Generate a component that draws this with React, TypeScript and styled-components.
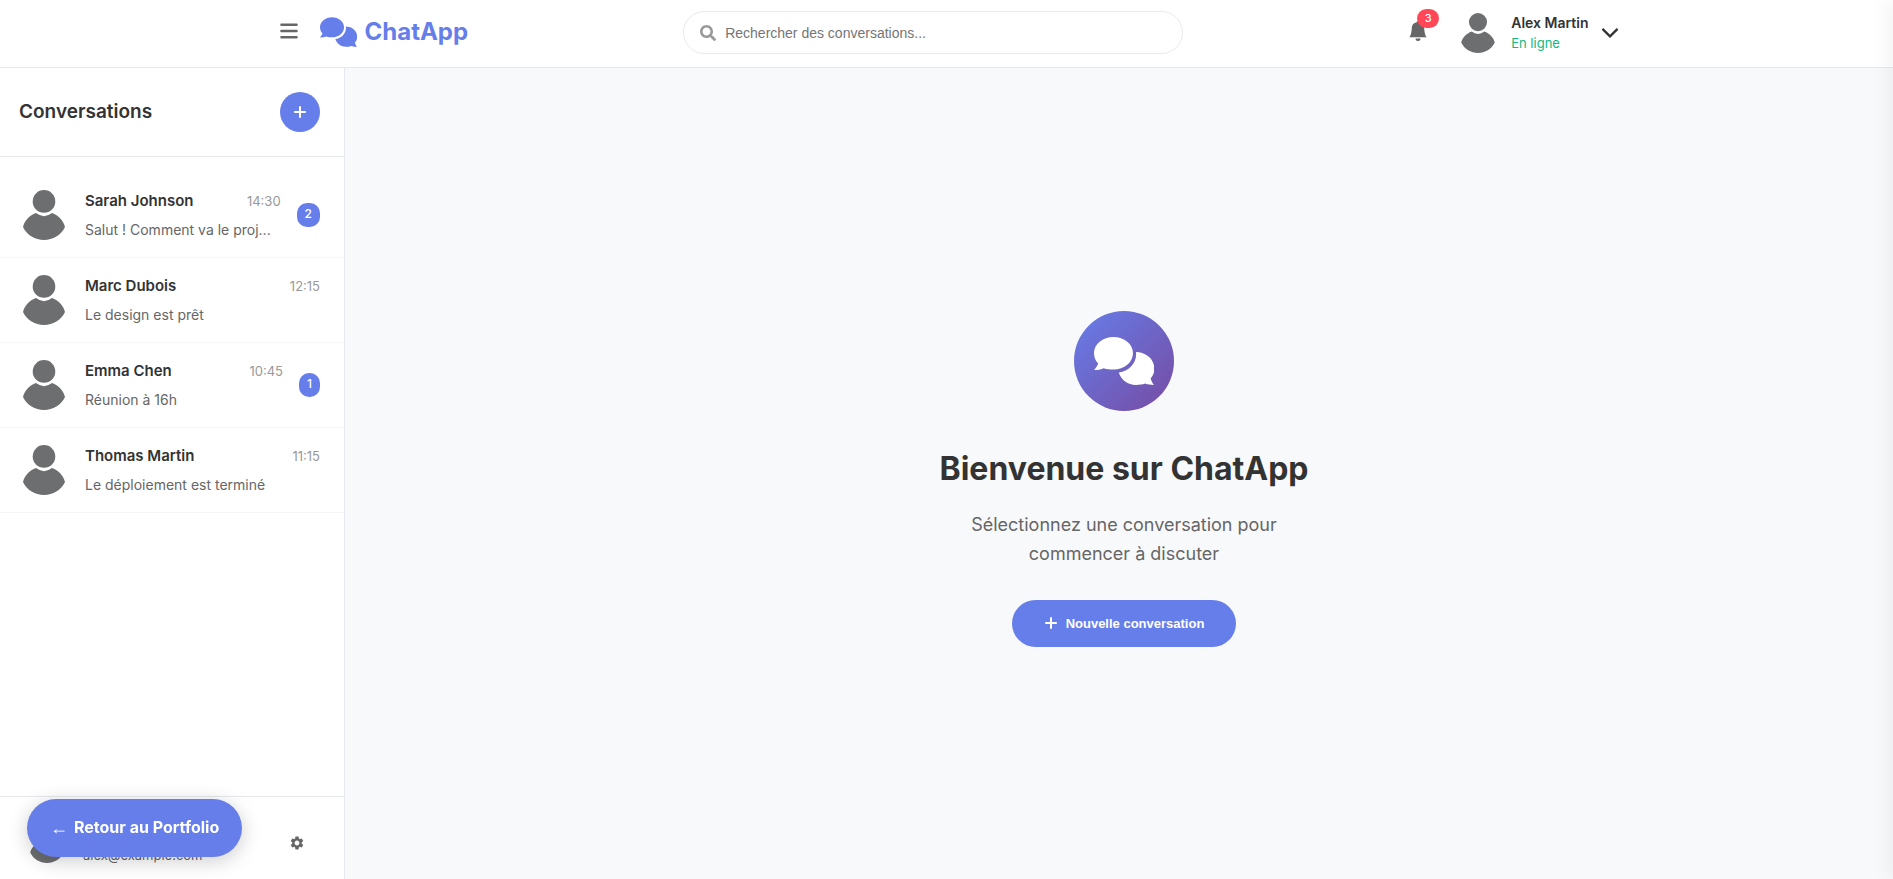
import React from 'react';
import styled, { createGlobalStyle } from 'styled-components';
import { FaSearch } from 'react-icons/fa';
import { FaBars } from 'react-icons/fa6';
import { BsBellFill } from 'react-icons/bs';
import { MdSettings } from 'react-icons/md';
import { IoChevronDownSharp } from 'react-icons/io5';

const color = {
  primary: '#667eea',
  text: '#333',
  muted: '#666',
  faint: '#999',
  line: '#e5e8ec',
  rowLine: '#f5f6f8',
  canvas: '#f8f9fb',
  online: '#10b981',
  alert: '#ff4757',
};

const GlobalStyle = createGlobalStyle`
  *, *::before, *::after { box-sizing: border-box; }
  body {
    margin: 0;
    font-family: Inter, 'Liberation Sans', sans-serif;
    line-height: 1.6;
    color: ${color.text};
    background: #fff;
  }
  h1, h2, h3, p, ul { margin: 0; padding: 0; }
  button, input { font-family: 'Liberation Sans', Arial, sans-serif; }
  svg { display: block; flex-shrink: 0; }
`;

const Page = styled.div`
  display: flex;
  flex-direction: column;
  height: 100vh;
  overflow: hidden;
`;

const Header = styled.header`
  border-bottom: 1px solid #e8e8e8;
  background: #fff;
`;

const HeaderInner = styled.div`
  display: flex;
  align-items: center;
  justify-content: space-between;
  max-width: 1400px;
  margin: 0 auto;
  padding: 11px 20px 13px;
`;

const HeaderGroup = styled.div<{ $gap: number }>`
  display: flex;
  align-items: center;
  gap: ${({ $gap }) => $gap}px;
`;

const IconButton = styled.button<{ $pad: number }>`
  position: relative;
  display: flex;
  padding: 8px ${({ $pad }) => $pad}px 12px;
  border: none;
  background: none;
  color: ${color.muted};
  cursor: pointer;
`;

const Logo = styled.a`
  display: flex;
  align-items: center;
  gap: 8px;
  padding-bottom: 2px;
  color: ${color.primary};
  font-size: 24px;
  font-weight: 700;
  line-height: 32px;
  text-decoration: none;
`;

const SearchBox = styled.label`
  display: flex;
  align-items: center;
  gap: 9px;
  flex: 0 1 500px;
  height: 43px;
  padding: 0 16px;
  border: 1px solid #eaeaea;
  border-radius: 22px;
  color: ${color.faint};
`;

const SearchInput = styled.input`
  flex: 1;
  min-width: 0;
  padding: 0;
  border: none;
  outline: none;
  background: none;
  font-size: 14px;
  color: ${color.text};
  &::placeholder { color: #757575; }
`;

const AlertCount = styled.span`
  position: absolute;
  top: -4px;
  right: -1px;
  min-width: 22px;
  padding: 0 6px;
  border-radius: 10px;
  background: ${color.alert};
  color: #fff;
  font-family: Inter, sans-serif;
  font-size: 11px;
  font-weight: 500;
  line-height: 19px;
  text-align: center;
`;

const ProfileButton = styled.button`
  display: flex;
  align-items: center;
  padding: 0 4px 0 0;
  border: none;
  background: none;
  color: ${color.text};
  font-family: inherit;
  text-align: left;
  cursor: pointer;
`;

const ProfileText = styled.span`
  display: flex;
  flex-direction: column;
  margin: 0 10px 0 13px;
`;

const ProfileName = styled.span`
  font-size: 14px;
  font-weight: 600;
  line-height: 20px;
`;

const ProfileStatus = styled.span`
  font-size: 13px;
  line-height: 20px;
  color: ${color.online};
`;

const Body = styled.div`
  display: flex;
  flex: 1;
  min-height: 0;
`;

const Sidebar = styled.aside`
  display: flex;
  flex-direction: column;
  flex: 0 0 345px;
  min-width: 0;
  border-right: 1px solid ${color.line};
  background: #fff;
`;

const SidebarHeader = styled.div`
  display: flex;
  align-items: center;
  justify-content: space-between;
  padding: 24px 24px 24px 19px;
  border-bottom: 1px solid ${color.line};
`;

const SidebarTitle = styled.h2`
  font-size: 19px;
  font-weight: 600;
`;

const RoundButton = styled.button`
  display: flex;
  align-items: center;
  justify-content: center;
  width: 40px;
  height: 40px;
  padding: 0;
  border: none;
  border-radius: 50%;
  background: ${color.primary};
  color: #fff;
  cursor: pointer;
`;

const List = styled.ul`
  flex: 1;
  min-height: 0;
  padding-top: 16px;
  overflow: hidden;
  list-style: none;
`;

const Row = styled.li`
  display: flex;
  align-items: center;
  gap: 16px;
  height: 85px;
  padding: 0 24px 0 19px;
  border-bottom: 1px solid ${color.rowLine};
`;

const RowText = styled.div`
  display: flex;
  flex: 1;
  flex-direction: column;
  gap: 5px;
  min-width: 0;
`;

const RowTop = styled.div`
  display: flex;
  align-items: center;
  justify-content: space-between;
`;

const RowName = styled.h3`
  font-size: 15px;
  font-weight: 600;
  line-height: 24px;
`;

const RowTime = styled.time`
  font-size: 13px;
  line-height: 24px;
  color: ${color.faint};
`;

const RowPreview = styled.p`
  overflow: hidden;
  font-size: 14px;
  line-height: 24px;
  color: ${color.muted};
  text-overflow: ellipsis;
  white-space: nowrap;
`;

const Unread = styled.span`
  height: 24px;
  padding: 0 8px;
  border-radius: 10px;
  background: ${color.primary};
  color: #fff;
  font-size: 12px;
  font-weight: 500;
  line-height: 22px;
`;

const SidebarFooter = styled.div`
  display: flex;
  align-items: center;
  gap: 16px;
  padding: 24px 27px 14px 27px;
  border-top: 1px solid ${color.line};
`;

const SettingsButton = styled.button`
  display: flex;
  padding: 12px;
  border: none;
  background: none;
  color: ${color.muted};
  cursor: pointer;
`;

const FooterMail = styled.span`
  flex: 1;
  padding-top: 24px;
  font-size: 13px;
  line-height: 20px;
  color: ${color.muted};
`;

const Main = styled.main`
  display: flex;
  flex: 1;
  align-items: center;
  justify-content: center;
  padding: 10px 0 0 10px;
  background: ${color.canvas};
`;

const Welcome = styled.section`
  display: flex;
  flex-direction: column;
  align-items: center;
  text-align: center;
`;

const WelcomeIcon = styled.div`
  display: flex;
  align-items: center;
  justify-content: center;
  width: 100px;
  height: 100px;
  margin-bottom: 32px;
  border-radius: 50%;
  background: linear-gradient(135deg, #667eea 0%, #764ba2 100%);
  color: #fff;
`;

const WelcomeTitle = styled.h1`
  margin-bottom: 16px;
  font-size: 32px;
  font-weight: 700;
  line-height: 51px;
`;

const WelcomeText = styled.p`
  max-width: 336px;
  margin-bottom: 32px;
  font-size: 18px;
  line-height: 29px;
  color: ${color.muted};
`;

const PrimaryButton = styled.button`
  display: flex;
  align-items: center;
  gap: 8px;
  height: 47px;
  padding: 0 32px;
  border: none;
  border-radius: 24px;
  background: ${color.primary};
  color: #fff;
  font-size: 13px;
  font-weight: 700;
  cursor: pointer;
`;

const BackLink = styled.a`
  position: fixed;
  bottom: 22px;
  left: 27px;
  display: flex;
  align-items: center;
  gap: 6px;
  height: 58px;
  padding: 0 23px;
  border-radius: 29px;
  background: ${color.primary};
  box-shadow: 0 4px 20px rgba(0, 0, 0, 0.2);
  color: #fff;
  font-size: 16px;
  font-weight: 700;
  text-decoration: none;
`;

const BackArrow = styled.span`
  font-family: 'Liberation Serif', 'Times New Roman', serif;
  font-size: 18px;
  font-weight: 400;
`;

const Drawer = styled.div`
  position: fixed;
  top: 0;
  bottom: 0;
  left: 100%;
  width: 320px;
  background: #fff;
  box-shadow: -4px 0 20px rgba(0, 0, 0, 0.06);
`;

const Avatar = ({ size }: { size: number }) => (
  <svg width={size} height={size} viewBox="0 0 50 50" fill="#6d6e70" aria-hidden="true">
    <circle cx="25" cy="11.4" r="11.3" />
    <path d="M17 23.1Q25 29.2 33 23.1C39.5 25.6 44.6 30.8 46 37C42 45.2 34 50 25 50S8 45.2 4 37C5.4 30.8 10.5 25.6 17 23.1Z" />
  </svg>
);

const Bubbles = ({ width, height }: { width: number; height: number }) => (
  <svg width={width} height={height} viewBox="0 0 60 48" fill="currentColor" aria-hidden="true">
    <path d="M19.5 0C30.3 0 39 7.2 39 16.2S30.3 32.6 19.5 32.6C16 32.6 12.6 32.2 9.8 31.2C7 32.5 3.5 33 0 33C1.8 31.2 3.2 29 4.2 26.6C1.6 23.8 0 20.2 0 16.2C0 7.2 8.7 0 19.5 0Z" />
    <path d="M42 15C51.8 15 60.4 22.2 60.4 31.6C60.4 35.5 59 38.8 56.6 41.4C57.4 43.8 58.5 46.2 60 48C56.7 48 53.8 47.6 51.2 46.6C48.5 47.6 45.4 48 42 48C33.8 48 27 42.8 24.8 35.5C34.5 34.4 42.1 26.5 42.1 17.5Z" />
  </svg>
);

const Plus = () => (
  <svg width="14" height="14" viewBox="0 0 14 14" fill="none" stroke="currentColor" strokeWidth="2" aria-hidden="true">
    <path d="M7 1.2V12.8M1.2 7H12.8" />
  </svg>
);

type Conversation = { name: string; time: string; preview: string; unread?: number };

const conversations: Conversation[] = [
  { name: 'Sarah Johnson', time: '14:30', preview: 'Salut ! Comment va le proj...', unread: 2 },
  { name: 'Marc Dubois', time: '12:15', preview: 'Le design est prêt' },
  { name: 'Emma Chen', time: '10:45', preview: 'Réunion à 16h', unread: 1 },
  { name: 'Thomas Martin', time: '11:15', preview: 'Le déploiement est terminé' },
];

export default function App() {
  return (
    <>
      <GlobalStyle />
      <Page>
        <Header>
          <HeaderInner>
            <HeaderGroup $gap={9}>
              <IconButton $pad={12} aria-label="Menu">
                <FaBars size={20} />
              </IconButton>
              <Logo href="#">
                <Bubbles width={37} height={30} />
                ChatApp
              </Logo>
            </HeaderGroup>
            <SearchBox>
              <FaSearch size={16} />
              <SearchInput
                type="text"
                aria-label="Rechercher des conversations"
                placeholder="Rechercher des conversations..."
              />
            </SearchBox>
            <HeaderGroup $gap={20}>
              <IconButton $pad={10} aria-label="Notifications">
                <BsBellFill size={20} />
                <AlertCount>3</AlertCount>
              </IconButton>
              <ProfileButton>
                <Avatar size={40} />
                <ProfileText>
                  <ProfileName>Alex Martin</ProfileName>
                  <ProfileStatus>En ligne</ProfileStatus>
                </ProfileText>
                <IoChevronDownSharp size={24} />
              </ProfileButton>
            </HeaderGroup>
          </HeaderInner>
        </Header>
        <Body>
          <Sidebar>
            <SidebarHeader>
              <SidebarTitle>Conversations</SidebarTitle>
              <RoundButton aria-label="Nouvelle conversation">
                <Plus />
              </RoundButton>
            </SidebarHeader>
            <List>
              {conversations.map((c) => (
                <Row key={c.name}>
                  <Avatar size={50} />
                  <RowText>
                    <RowTop>
                      <RowName>{c.name}</RowName>
                      <RowTime>{c.time}</RowTime>
                    </RowTop>
                    <RowPreview>{c.preview}</RowPreview>
                  </RowText>
                  {c.unread && <Unread>{c.unread}</Unread>}
                </Row>
              ))}
            </List>
            <SidebarFooter>
              <Avatar size={40} />
              <FooterMail>alex@example.com</FooterMail>
              <SettingsButton aria-label="Paramètres">
                <MdSettings size={16} />
              </SettingsButton>
            </SidebarFooter>
          </Sidebar>
          <Main>
            <Welcome>
              <WelcomeIcon>
                <Bubbles width={60} height={48} />
              </WelcomeIcon>
              <WelcomeTitle>Bienvenue sur ChatApp</WelcomeTitle>
              <WelcomeText>Sélectionnez une conversation pour commencer à discuter</WelcomeText>
              <PrimaryButton>
                <Plus />
                Nouvelle conversation
              </PrimaryButton>
            </Welcome>
          </Main>
        </Body>
      </Page>
      <BackLink href="#">
        <BackArrow>←</BackArrow>
        <span>Retour au Portfolio</span>
      </BackLink>
      <Drawer aria-hidden="true" />
    </>
  );
}
